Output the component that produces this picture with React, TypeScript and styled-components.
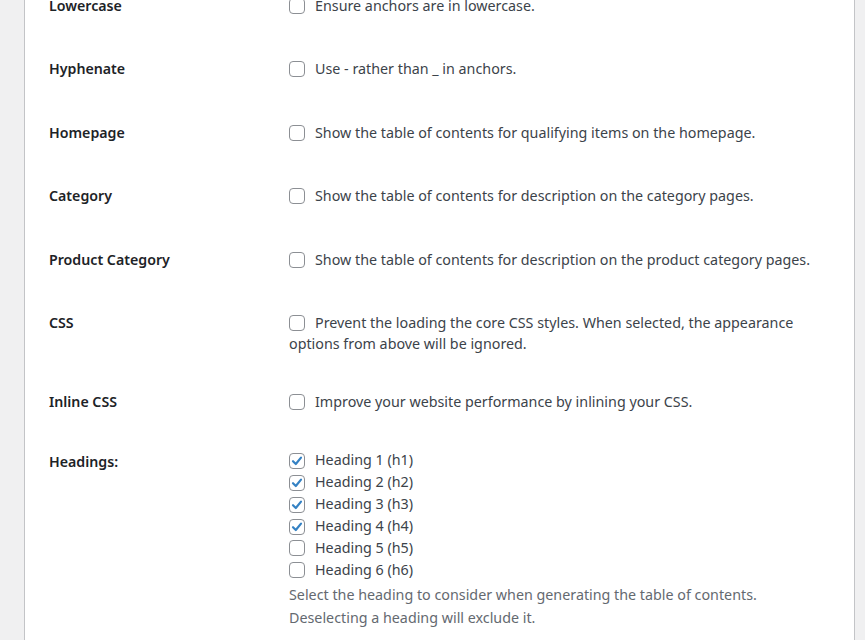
import React from "react";
import styled, { createGlobalStyle } from "styled-components";

const Global = createGlobalStyle`
  html, body { margin: 0; padding: 0; background: #f0f0f1; overflow: hidden; }
  body { font-family: "Noto Sans", "Open Sans", sans-serif; font-size: 14px; color: #3c434a; }
`;

const Page = styled.div`
  padding-left: 24px;
  width: 831px;
  margin-top: -26px;
`;

const Panel = styled.div`
  background: #ffffff;
  border-left: 1px solid #c3c4c7;
  border-right: 1px solid #c3c4c7;
  padding: 0 24px;
  min-height: 700px;
  box-sizing: border-box;
  width: 831px;
`;

const Row = styled.div<{ $bottom?: number }>`
  display: grid;
  grid-template-columns: 240px 1fr;
  padding: 20.75px 0 ${(p) => (p.$bottom ?? 20.75)}px;
`;

const Label = styled.div<{ $offset?: number }>`
  font-weight: 600;
  color: #1d2327;
  line-height: 22px;
  font-size: 14.2px;
  padding-top: ${(p) => p.$offset ?? 0}px;
`;

const Field = styled.div`
  display: flex;
  flex-direction: column;
`;

const Option = styled.label<{ $lh?: number }>`
  display: block;
  line-height: ${(p) => p.$lh ?? 22}px;
  color: #3c434a;
  font-size: 14.3px;
`;

const Box = styled.span`
  display: inline-flex;
  align-items: center;
  justify-content: center;
  width: 16px;
  height: 16px;
  box-sizing: border-box;
  border: 1px solid #8c8f94;
  border-radius: 4px;
  background: #fff;
  vertical-align: -3px;
  margin-right: 10px;
`;

const Desc = styled.p`
  margin: 2px 0 0;
  color: #646970;
  line-height: 23px;
  font-size: 14.3px;
`;

const Check = ({ checked }: { checked?: boolean }) => (
  <Box>
    {checked && (
      <svg width="14" height="14" viewBox="0 0 14 14">
        <path d="M3 7.2 L5.8 10 L11 3.6" fill="none" stroke="#3582c4" strokeWidth="2.2" strokeLinecap="round" strokeLinejoin="round" />
      </svg>
    )}
  </Box>
);

const simple: [string, string][] = [
  ["Lowercase", "Ensure anchors are in lowercase."],
  ["Hyphenate", "Use - rather than _ in anchors."],
  ["Homepage", "Show the table of contents for qualifying items on the homepage."],
  ["Category", "Show the table of contents for description on the category pages."],
  ["Product Category", "Show the table of contents for description on the product category pages."],
];

const headings = [
  ["Heading 1 (h1)", true],
  ["Heading 2 (h2)", true],
  ["Heading 3 (h3)", true],
  ["Heading 4 (h4)", true],
  ["Heading 5 (h5)", false],
  ["Heading 6 (h6)", false],
] as const;

export default function App() {
  return (
    <>
      <Global />
      <Page>
        <Panel>
          {simple.map(([l, t]) => (
            <Row key={l}>
              <Label>{l}</Label>
              <Field>
                <Option>
                  <Check />
                  {t}
                </Option>
              </Field>
            </Row>
          ))}
          <Row $bottom={15.75}>
            <Label>CSS</Label>
            <Field>
              <Option $lh={21}>
                <Check />
                Prevent the loading the core CSS styles. When selected, the appearance options from above will be ignored.
              </Option>
            </Field>
          </Row>
          <Row $bottom={15.5}>
            <Label>Inline CSS</Label>
            <Field>
              <Option>
                <Check />
                Improve your website performance by inlining your CSS.
              </Option>
            </Field>
          </Row>
          <Row>
            <Label $offset={2}>Headings:</Label>
            <Field>
              {headings.map(([t, c]) => (
                <Option key={t}>
                  <Check checked={c} />
                  {t}
                </Option>
              ))}
              <Desc>
                Select the heading to consider when generating the table of contents.
                <br />
                Deselecting a heading will exclude it.
              </Desc>
            </Field>
          </Row>
        </Panel>
      </Page>
    </>
  );
}
